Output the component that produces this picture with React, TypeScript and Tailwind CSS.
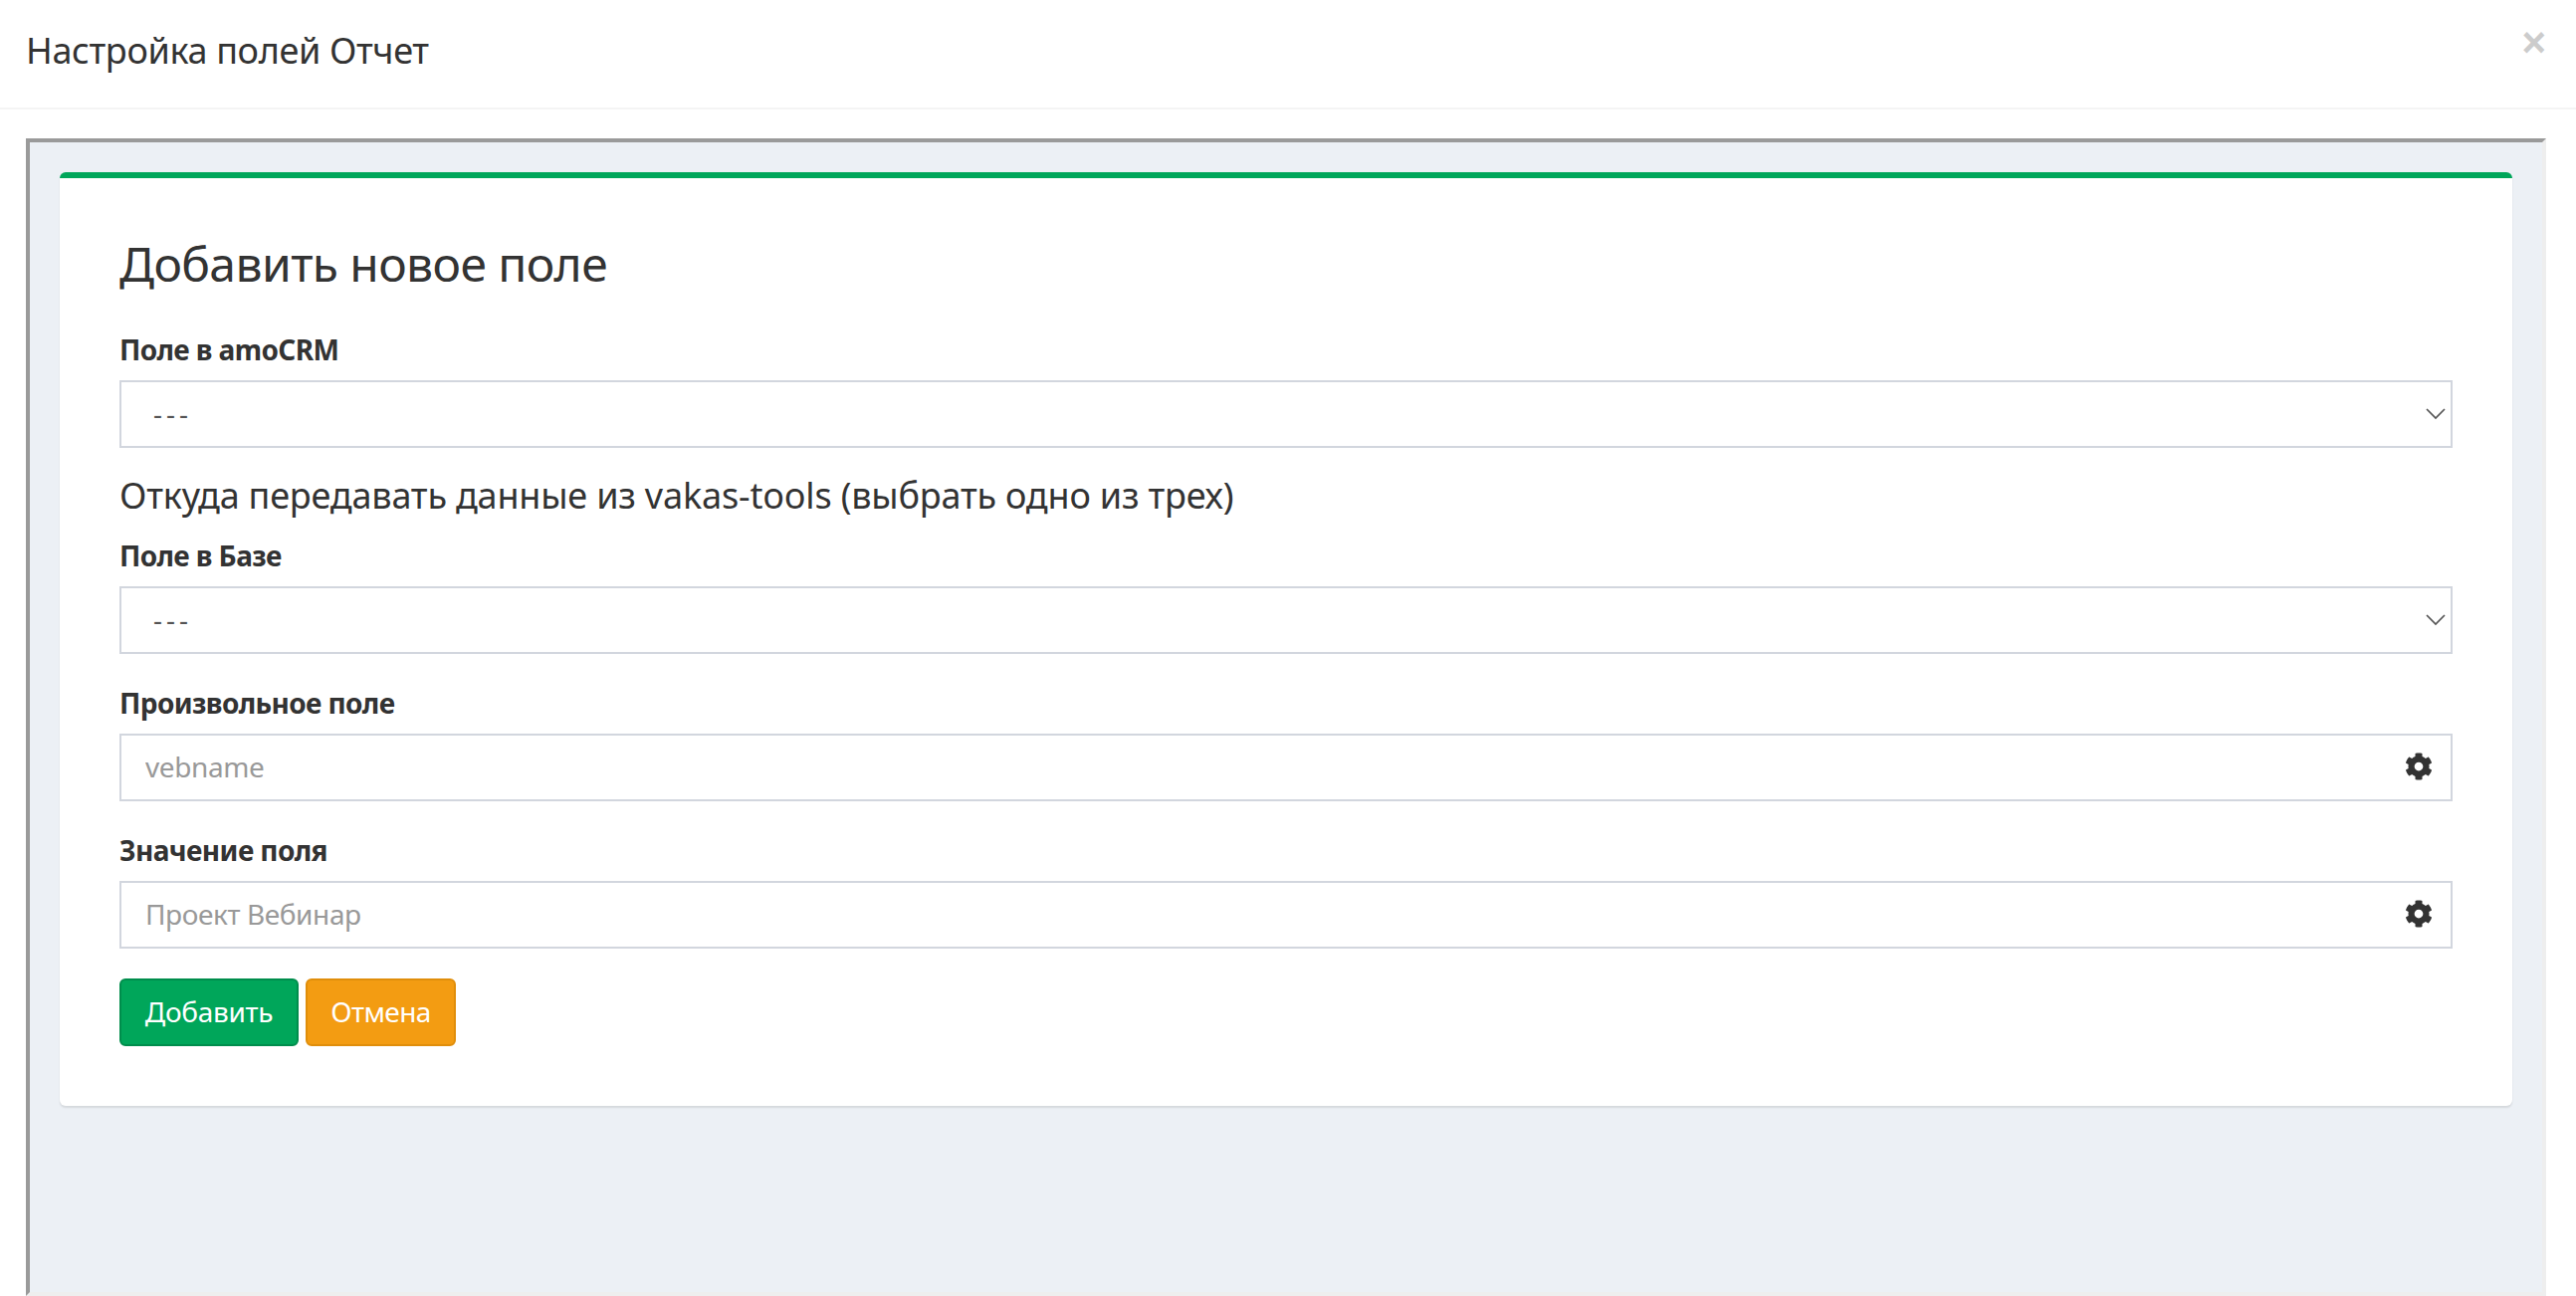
import { FaCog } from 'react-icons/fa'

const SelectField = ({ label }: { label: string }) => (
  <div className="mb-[30px]">
    <label className="block mb-[12px] text-[28px] leading-[38px] font-bold tracking-[-0.6px]">{label}</label>
    <div className="relative">
      <select className="block w-full h-[68px] pl-[32px] pr-[60px] pb-[2px] border-2 border-[#d2d6de] bg-white text-[28px] tracking-[4px] text-[#555] appearance-none outline-none">
        <option>---</option>
      </select>
      <svg className="absolute right-[7px] top-[28px] w-[20px] h-[12px] text-[#555] pointer-events-none" viewBox="0 0 20 12" fill="none" stroke="currentColor" strokeWidth="1.7">
        <path d="M1 1l9 9 9-9" />
      </svg>
    </div>
  </div>
)

const InputField = ({ label, placeholder }: { label: string; placeholder: string }) => (
  <div className="mb-[30px]">
    <label className="block mb-[12px] text-[28px] leading-[38px] font-bold tracking-[-0.6px]">{label}</label>
    <div className="relative">
      <input
        placeholder={placeholder}
        className="block w-full h-[68px] pl-[24px] pr-[60px] pb-[2px] border-2 border-[#d2d6de] bg-white text-[28px] tracking-[-0.4px] text-[#555] placeholder:text-[#999] outline-none"
      />
      <FaCog className="absolute right-[20px] top-[19px] w-[28px] h-[28px] text-[#333]" />
    </div>
  </div>
)

export default function App() {
  return (
    <div className="h-screen flex flex-col overflow-hidden bg-white text-[#333] font-['Noto_Sans','Open_Sans',sans-serif]">
      <div className="relative h-[110px] shrink-0 flex items-center pl-[26px] pb-[7px] border-b-2 border-[#f4f4f4]">
        <h4 className="text-[36px] leading-[40px] tracking-[-0.35px]">Настройка полей Отчет</h4>
        <span className="absolute right-[30px] top-[20px] text-[#ccc] text-[42px] leading-[46px] font-bold font-['Liberation_Sans',sans-serif]">×</span>
      </div>

      <div className="flex-1 mt-[29px] ml-[26px] mr-[30px] bg-[#ecf0f5] border-4 border-t-[#9a9a9a] border-l-[#9a9a9a] border-r-[#eeeeee] border-b-[#eeeeee] px-[30px] pt-[30px]">
        <div className="bg-white rounded-[6px] border-t-[6px] border-[#00a65a] shadow-[0_2px_2px_rgba(0,0,0,0.1)] px-[60px] pt-[54px] pb-[60px]">
          <h3 className="text-[48px] leading-[64px] mb-[35px] tracking-[-0.6px]">Добавить новое поле</h3>
          <SelectField label="Поле в amoCRM" />
          <h4 className="text-[36px] leading-[40px] -mt-[2px] mb-[21px] tracking-[-0.2px]">Откуда передавать данные из vakas-tools (выбрать одно из трех)</h4>
          <SelectField label="Поле в Базе" />
          <InputField label="Произвольное поле" placeholder="vebname" />
          <InputField label="Значение поля" placeholder="Проект Вебинар" />
          <div className="flex gap-[7px]">
            <button className="h-[68px] w-[180px] pb-[2px] rounded-[6px] border-2 border-[#008d4c] bg-[#00a65a] text-white text-[28px] tracking-[-0.3px]">Добавить</button>
            <button className="h-[68px] w-[151px] pb-[2px] rounded-[6px] border-2 border-[#e08e0b] bg-[#f39c12] text-white text-[28px] tracking-[-0.6px]">Отмена</button>
          </div>
        </div>
      </div>
    </div>
  )
}
